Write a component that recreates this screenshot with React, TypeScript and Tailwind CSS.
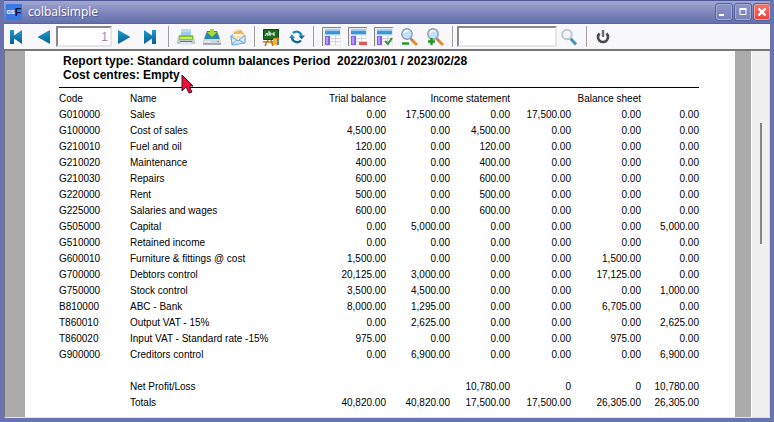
import type { ReactNode } from "react";

type Row = [string, string, string, string, string, string, string, string];

const rows: Row[] = [
  ["G010000", "Sales", "0.00", "17,500.00", "0.00", "17,500.00", "0.00", "0.00"],
  ["G100000", "Cost of sales", "4,500.00", "0.00", "4,500.00", "0.00", "0.00", "0.00"],
  ["G210010", "Fuel and oil", "120.00", "0.00", "120.00", "0.00", "0.00", "0.00"],
  ["G210020", "Maintenance", "400.00", "0.00", "400.00", "0.00", "0.00", "0.00"],
  ["G210030", "Repairs", "600.00", "0.00", "600.00", "0.00", "0.00", "0.00"],
  ["G220000", "Rent", "500.00", "0.00", "500.00", "0.00", "0.00", "0.00"],
  ["G225000", "Salaries and wages", "600.00", "0.00", "600.00", "0.00", "0.00", "0.00"],
  ["G505000", "Capital", "0.00", "5,000.00", "0.00", "0.00", "0.00", "5,000.00"],
  ["G510000", "Retained income", "0.00", "0.00", "0.00", "0.00", "0.00", "0.00"],
  ["G600010", "Furniture & fittings @ cost", "1,500.00", "0.00", "0.00", "0.00", "1,500.00", "0.00"],
  ["G700000", "Debtors control", "20,125.00", "3,000.00", "0.00", "0.00", "17,125.00", "0.00"],
  ["G750000", "Stock control", "3,500.00", "4,500.00", "0.00", "0.00", "0.00", "1,000.00"],
  ["B810000", "ABC - Bank", "8,000.00", "1,295.00", "0.00", "0.00", "6,705.00", "0.00"],
  ["T860010", "Output VAT - 15%", "0.00", "2,625.00", "0.00", "0.00", "0.00", "2,625.00"],
  ["T860020", "Input VAT - Standard rate -15%", "975.00", "0.00", "0.00", "0.00", "975.00", "0.00"],
  ["G900000", "Creditors control", "0.00", "6,900.00", "0.00", "0.00", "0.00", "6,900.00"],
];

const totals: Row[] = [
  ["", "Net Profit/Loss", "", "", "10,780.00", "0", "0", "10,780.00"],
  ["", "Totals", "40,820.00", "40,820.00", "17,500.00", "17,500.00", "26,305.00", "26,305.00"],
];

function ToolButton({ label, children }: { label: string; children: ReactNode }) {
  return (
    <button type="button" aria-label={label} title={label} className="flex h-5 w-5 shrink-0 items-center justify-center">
      {children}
    </button>
  );
}

function Divider() {
  return <div className="h-[21px] w-px shrink-0 bg-[#a0a0a0]" />;
}

function Arrow({ flip = false, bar = false }: { flip?: boolean; bar?: boolean }) {
  return (
    <svg viewBox="0 0 16 16" className={flip ? "h-4 w-4 -scale-x-100" : "h-4 w-4"}>
      <defs>
        <linearGradient id="arrowBlue" x1="0" y1="0" x2="0" y2="1">
          <stop offset="0" stopColor="#1d9bcb" />
          <stop offset="1" stopColor="#0b5f93" />
        </linearGradient>
      </defs>
      <path d={bar ? "M2 1l8 5.500V1h4v14h-4V9.500L2 15z" : "M2 1L14.500 8 2 15z"} fill="url(#arrowBlue)" />
    </svg>
  );
}

function PrinterIcon() {
  return (
    <svg viewBox="0 0 18 18" className="h-[18px] w-[18px]">
      <path d="M4 1h10v8H4z" fill="#9fcbef" />
      <path d="M4 1h10v3H4z" fill="#b9dbf5" />
      <path d="M1 8h16l1 6v2H0v-2z" fill="#c3c8cd" />
      <path d="M2 7h14v5H2z" fill="#86c425" />
      <path d="M3 9h12v2H3z" fill="#c8ec6c" />
      <path d="M3 13h12v1H3z" fill="#6b7378" />
      <path d="M4 14h10l1 3H3z" fill="#dfe9f4" />
    </svg>
  );
}

function ExportIcon() {
  return (
    <svg viewBox="0 0 18 18" className="h-[18px] w-[18px]">
      <path d="M4 3h10l3 8v2H1v-2z" fill="#2f86a8" />
      <path d="M1 11h16l1 2v3H0v-3z" fill="#d3d8dc" />
      <path d="M0 15h18v2H0z" fill="#a3adb4" />
      <path d="M2 13h5v1H2z" fill="#fff" />
      <path d="M14 13h2v1h-2z" fill="#6abf36" />
      <path d="M7 1h4v3h3l-5 5-5-5h3z" fill="#a6dc2c" />
    </svg>
  );
}

function MailIcon() {
  return (
    <svg viewBox="0 0 18 18" className="h-[18px] w-[18px]">
      <path d="M1 8l8-7 7 6 1 8-14 2z" fill="#a9cdf0" />
      <path d="M4 3l8-2 4 5-1 6H4z" fill="#fbe3b4" />
      <path d="M5 4l7-2 3 4H5z" fill="#e9b36a" />
      <path d="M6 6h7v2H6z" fill="#fff6df" />
      <path d="M2 8l7 5 7-6v8L3 17z" fill="#d5ebfb" stroke="#6fa6da" />
      <path d="M3 16l5-4m7 3l-5-3" stroke="#6fa6da" />
    </svg>
  );
}

function BoardIcon() {
  return (
    <svg viewBox="0 0 18 18" className="h-[18px] w-[18px]">
      <path d="M6 12l-3 6m6-6l2 6M1 14h11" stroke="#b87a27" strokeWidth="1.600" />
      <path d="M1.500 1.500h15v10h-15z" fill="#1d6b23" stroke="#0e4614" />
      <path d="M3 8l2-3 1 3m1-5v4h2V5H7m6 0h-2v2h2" fill="none" stroke="#fff" />
      <path d="M11 10h4v7h-4z" fill="#f3b52b" />
      <path d="M15 9l2 1v7h-2z" fill="#4e83c4" />
      <path d="M11 10h6v1h-6z" fill="#d77b1f" />
    </svg>
  );
}

function RefreshIcon() {
  return (
    <svg viewBox="0 0 16 16" className="h-4 w-4" fill="none">
      <path d="M4 4A5.200 5.200 0 0 1 12.500 6.500" stroke="#1d87b5" strokeWidth="2.400" />
      <path d="M12 11.500A5.200 5.200 0 0 1 3 8.500" stroke="#0f679a" strokeWidth="2.400" />
      <path d="M9.500 6.500h6.500L12.500 10.500z" fill="#126c9d" />
      <path d="M0 9h6L3 5z" fill="#2393c1" />
    </svg>
  );
}

function LayoutIcon({ mark }: { mark?: "minus" | "check" }) {
  return (
    <svg viewBox="0 0 19 19" className="h-[19px] w-[19px]">
      <path d="M0 0h19v19H0z" fill="#e9eaf4" />
      <path d="M.5 19V.5H19" fill="none" stroke="#858585" />
      <path d="M3 2h15v6H3z" fill="#9bd0f2" />
      <path d="M3 4h15v3H3z" fill="#3f96d6" />
      <path d="M3 9h5v9H3z" fill="#8b5cf0" />
      <path d="M4 10h2v7H4z" fill="#b79cff" />
      <path d="M9 9h9v9H9z" fill="#fff" />
      <path d="M9 11.500h9M9 14.500h9M13.500 9v9" stroke="#cfd2da" />
      {mark === "minus" && <path d="M11 15h8v3h-8z" fill="#dc5a5a" />}
      {mark === "check" && <path d="M11 14l3 3 4-6" fill="none" stroke="#35913c" strokeWidth="2" />}
    </svg>
  );
}

function ZoomIcon({ plus = false }: { plus?: boolean }) {
  return (
    <svg viewBox="0 0 18 18" className="h-[18px] w-[18px]">
      <path d="M11 11l6 6" stroke="#f08a24" strokeWidth="3" />
      <path d="M10 10l3 3" stroke="#8a8f98" strokeWidth="2" />
      <circle cx="7" cy="6" r="5.200" fill="#c4e2fa" stroke="#8c9bb5" strokeWidth="1.400" />
      <path d="M4 5a3.500 3.500 0 0 1 5-2" fill="none" stroke="#fff" strokeWidth="1.500" />
      <path d={plus ? "M2 13.500h7M5.500 10v7" : "M2 15.500h7"} stroke="#249228" strokeWidth="2.400" />
    </svg>
  );
}

function SearchIcon() {
  return (
    <svg viewBox="0 0 18 18" className="h-[18px] w-[18px]">
      <path d="M10.500 10.500l5.500 6" stroke="#3d95c4" strokeWidth="3" />
      <circle cx="7" cy="6.500" r="4.800" fill="#f5f6f8" stroke="#c4c6ca" strokeWidth="2" />
    </svg>
  );
}

function PowerIcon() {
  return (
    <svg viewBox="0 0 16 16" className="h-4 w-4" fill="none">
      <path d="M4.500 4.500A5 5 0 1 0 11.500 4.500" stroke="#4b4b4b" strokeWidth="2.600" />
      <path d="M8 1v7" stroke="#6e6e6e" strokeWidth="2.400" />
    </svg>
  );
}

function WindowButton({ label, close = false, children }: { label: string; close?: boolean; children: ReactNode }) {
  return (
    <button
      type="button"
      aria-label={label}
      className={
        close
          ? "flex h-4 w-4 items-center justify-center rounded-xs border border-[#f7a29c] bg-linear-to-b from-[#f27068] to-[#e8453c] outline outline-[#55609f]"
          : "flex h-4 w-4 items-center justify-center rounded-xs border border-[#a3aad3] bg-linear-to-b from-[#8c95c5] to-[#7882b7] outline outline-[#55609f]"
      }
    >
      <svg viewBox="0 0 12 12" className="h-3 w-3 shrink-0" fill="none" stroke="#fff">
        {children}
      </svg>
    </button>
  );
}

function ReportRow({ row }: { row: Row }) {
  return (
    <tr className="h-4">
      {row.map((cell, i) => (
        <td key={i} className={i < 2 ? "p-0 text-left" : "p-0 text-right"}>
          {cell}
        </td>
      ))}
    </tr>
  );
}

function ReportTable() {
  return (
    <table className="w-full table-fixed border-collapse text-[10px] leading-4 whitespace-nowrap">
      <colgroup>
        <col className="w-[71px]" />
        <col />
        <col className="w-[66px]" />
        <col className="w-16" />
        <col className="w-[60px]" />
        <col className="w-[61px]" />
        <col className="w-[70px]" />
        <col className="w-[58px]" />
      </colgroup>
      <thead>
        <tr className="h-4">
          <th scope="col" className="p-0 text-left font-normal">Code</th>
          <th scope="col" className="p-0 text-left font-normal">Name</th>
          <th scope="col" className="p-0 text-right font-normal">Trial balance</th>
          <th scope="colgroup" colSpan={2} className="p-0 text-right font-normal">Income statement</th>
          <th scope="colgroup" colSpan={2} className="p-0 text-right font-normal">Balance sheet</th>
          <td className="p-0" />
        </tr>
      </thead>
      <tbody>
        {rows.map((row) => (
          <ReportRow key={row[0]} row={row} />
        ))}
      </tbody>
      <tfoot>
        <tr className="h-4">
          <td colSpan={8} className="p-0" />
        </tr>
        {totals.map((row) => (
          <ReportRow key={row[1]} row={row} />
        ))}
      </tfoot>
    </table>
  );
}

const fieldClass =
  "h-[21px] shrink-0 border-2 border-t-[#8a8a8a] border-r-[#e6e6e6] border-b-[#e6e6e6] border-l-[#8a8a8a] bg-white px-0.5 text-right text-[12px] text-[#9a86c4] outline-none";

export default function App() {
  return (
    <div className="flex h-screen flex-col overflow-hidden border-x-4 border-b-4 border-[#6873af] bg-[#f8f8fb] font-['Liberation_Sans',Arial,sans-serif] text-black">
      <header className="-mx-1 flex h-6 shrink-0 items-center border-t border-b border-t-[#4d5796] border-b-[#5a65a3] bg-linear-to-b from-[#a0a8d0] via-[#7f89bd] to-[#6570ab] pr-1 pl-1.5">
        <div className="flex h-4 w-4 items-center justify-center bg-[#3b78e7] font-bold text-white">
          <span className="text-[7px]">os</span>
          <span className="text-[11px] text-[#10163a]">F</span>
        </div>
        <h1 className="ml-1.5 flex-1 font-['Open_Sans','Noto_Sans',sans-serif] text-[12px] leading-4 text-white [text-shadow:1px_1px_1px_#4b5590]">
          colbalsimple
        </h1>
        <div className="flex gap-[3px]">
          <WindowButton label="Minimize">
            <path d="M1 9h5" strokeWidth="2" />
          </WindowButton>
          <WindowButton label="Maximize">
            <path d="M3 3.500h6v5H3z" />
            <path d="M2.500 3h7" strokeWidth="2" />
          </WindowButton>
          <WindowButton label="Close" close>
            <path d="M2.500 2.500l7 7m0-7l-7 7" strokeWidth="2.400" />
          </WindowButton>
        </div>
      </header>

      <div role="toolbar" aria-label="Report tools" className="flex h-[25px] shrink-0 items-center">
        <div className="flex w-[164px] shrink-0 items-center gap-0.5 pl-0.5">
          <div className="flex w-12 justify-between">
            <ToolButton label="First page"><Arrow flip bar /></ToolButton>
            <ToolButton label="Previous page"><Arrow flip /></ToolButton>
          </div>
          <input aria-label="Page number" defaultValue="1" className={`w-14 ${fieldClass}`} />
          <div className="flex gap-1.5">
            <ToolButton label="Next page"><Arrow /></ToolButton>
            <ToolButton label="Last page"><Arrow bar /></ToolButton>
          </div>
        </div>
        <Divider />
        <div className="flex shrink-0 gap-1.5 pr-1.5 pl-[7px]">
          <ToolButton label="Print"><PrinterIcon /></ToolButton>
          <ToolButton label="Save"><ExportIcon /></ToolButton>
          <ToolButton label="Mail"><MailIcon /></ToolButton>
        </div>
        <Divider />
        <div className="flex shrink-0 gap-1.5 px-1.5">
          <ToolButton label="Design"><BoardIcon /></ToolButton>
          <ToolButton label="Refresh"><RefreshIcon /></ToolButton>
        </div>
        <Divider />
        <div className="flex shrink-0 gap-1.5 px-[7px]">
          <ToolButton label="Show layout"><LayoutIcon /></ToolButton>
          <ToolButton label="Remove from layout"><LayoutIcon mark="minus" /></ToolButton>
          <ToolButton label="Apply layout"><LayoutIcon mark="check" /></ToolButton>
          <ToolButton label="Zoom out"><ZoomIcon /></ToolButton>
          <ToolButton label="Zoom in"><ZoomIcon plus /></ToolButton>
        </div>
        <Divider />
        <input aria-label="Search text" className={`ml-1 w-[100px] ${fieldClass}`} />
        <div className="flex shrink-0 pr-[7px] pl-0.5">
          <ToolButton label="Search"><SearchIcon /></ToolButton>
        </div>
        <Divider />
        <div className="flex shrink-0 px-1.5">
          <ToolButton label="Close report"><PowerIcon /></ToolButton>
        </div>
      </div>

      <main className="flex min-h-0 flex-1 overflow-hidden border-t-2 border-b border-l border-t-[#777] border-b-[#e3e3e3] border-l-[#777] bg-[#ababab] pl-5">
        <article className="relative min-w-0 flex-1 bg-white pr-9 pl-[34px]">
          <h2 className="border-b border-black pt-[3px] pb-[5px] pl-1 text-[12px] leading-[14px] font-bold whitespace-pre">
            {"Report type: Standard column balances Period  2022/03/01 / 2023/02/28\nCost centres: Empty"}
          </h2>
          <div className="pt-[3px]">
            <ReportTable />
          </div>
          <svg viewBox="0 0 14 20" className="absolute top-[23px] left-[156px] h-5 w-3.5" aria-hidden="true">
            <path d="M1 1l11 11H8l3 6-3 1-3-6-4 4z" fill="#f5083c" stroke="#3a1520" />
          </svg>
        </article>
        <div className="w-4 shrink-0" />
        <div className="flex w-[19px] shrink-0 justify-center border-r border-l border-r-[#dcdcdc] border-l-white bg-[#f0f0f0] pt-[72px]">
          <div className="h-[121px] w-0.5 bg-[#858585]" />
        </div>
      </main>
    </div>
  );
}
